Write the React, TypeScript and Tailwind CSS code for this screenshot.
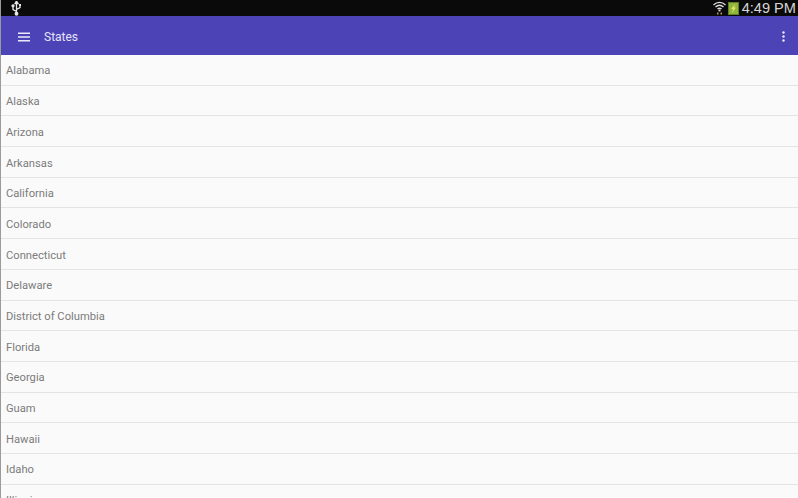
const states = ["Alabama","Alaska","Arizona","Arkansas","California","Colorado","Connecticut","Delaware","District of Columbia","Florida","Georgia","Guam","Hawaii","Idaho","Illinois"];

export default function App() {
  return (
    <div className="w-[798px] h-[498px] overflow-hidden flex flex-col bg-[#fafafa] border-l border-[#9a9a9a] font-['Roboto',sans-serif]">
      <div className="h-[16px] shrink-0 bg-[#0a0a0a] flex items-center justify-between pl-[9px] pr-[2px]">
        <svg width="13" height="15" viewBox="0 0 12 15" fill="none" stroke="#e8e8e8" strokeWidth="1.3">
          <path d="M6 13V2M6 10.500 2.500 8.500V5.500M6 8.500 9.500 6.500V4.500" />
          <path d="M6 0 4.500 2.500H7.500Z" fill="#e8e8e8" />
          <circle cx="6" cy="12.800" r="1.300" fill="#e8e8e8" />
          <circle cx="2.500" cy="4.800" r="1" fill="#e8e8e8" />
          <rect x="8.500" y="3" width="2" height="2" fill="#e8e8e8" stroke="none" />
        </svg>
        <div className="flex items-center">
          <svg width="15" height="15" viewBox="0 0 14 15" fill="none" stroke="#dcdcdc" strokeWidth="1.400" className="mr-[1px]">
            <path d="M1 4C4.500 0.500 9.500 0.500 13 4M3 6C5.500 3.800 8.500 3.800 11 6M5 8C6.200 7 7.800 7 9 8" />
            <circle cx="7" cy="9.500" r="1.100" fill="#dcdcdc" stroke="none" />
            <path d="M4.500 12.500H6M8 12.500H9.500" stroke="#b09a60" strokeWidth="2" />
          </svg>
          <svg width="11" height="13" viewBox="0 0 11 13" className="mr-[3px]">
            <rect x="0" y="0" width="11" height="13" fill="#5f7f28" />
            <rect x="1" y="1" width="9" height="11" fill="#8fb53a" />
            <path d="M7 2 3 7H5L4 11 8 5.500H6Z" fill="#e4e36a" />
          </svg>
          <span className="text-[14.600px] leading-[15px] text-[#d6d6d6] font-['Liberation_Sans',sans-serif]">4:49 PM</span>
        </div>
      </div>
      <header className="h-[39px] shrink-0 bg-[#4c43b6] flex items-center pl-[17px] pr-[13px] pt-[2px]">
        <svg width="12" height="10" viewBox="0 0 12 10" fill="#ece9fa" className="mr-[14px]">
          <rect x="0" y="0.500" width="12" height="1.500" />
          <rect x="0" y="4.250" width="12" height="1.500" />
          <rect x="0" y="8" width="12" height="1.500" />
        </svg>
        <span className="text-[12px] text-[#e6e3f7] flex-1">States</span>
        <svg width="3" height="11" viewBox="0 0 3 11" fill="#ece9fa">
          <circle cx="1.500" cy="1.500" r="1.200" />
          <circle cx="1.500" cy="5.500" r="1.200" />
          <circle cx="1.500" cy="9.500" r="1.200" />
        </svg>
      </header>
      <ul className="flex-1 overflow-hidden">
        {states.map((s) => (
          <li key={s} className="h-[30.700px] flex items-center pl-[5px] pt-[4px] border-b border-[#e4e4e4] text-[11.200px] text-[#7c7c7c] box-border">
            {s}
          </li>
        ))}
      </ul>
    </div>
  );
}
